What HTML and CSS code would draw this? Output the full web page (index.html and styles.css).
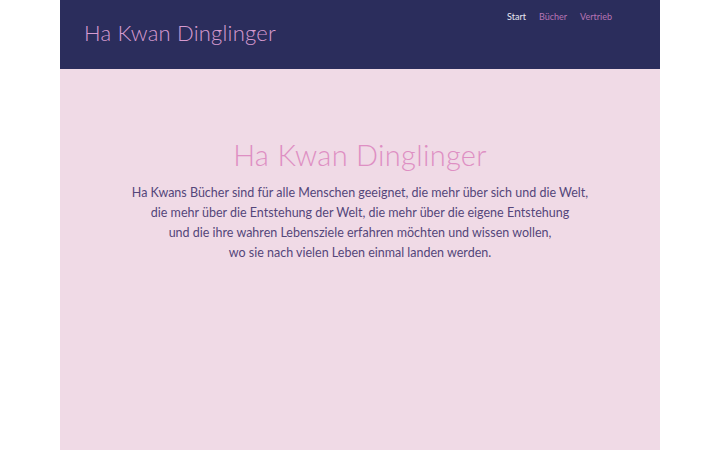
FILE: index.html
```html
<!DOCTYPE html>
<html lang="de">
<head>
<meta charset="utf-8">
<title>Ha Kwan Dinglinger</title>
<link rel="stylesheet" href="styles.css">
</head>
<body>
<div class="page">
  <header class="header">
    <div class="brand">Ha Kwan Dinglinger</div>
    <nav class="nav">
      <a class="nav-link active" href="#">Start</a>
      <a class="nav-link" href="#">Bücher</a>
      <a class="nav-link" href="#">Vertrieb</a>
    </nav>
  </header>
  <main class="main">
    <h1 class="title">Ha Kwan Dinglinger</h1>
    <p class="lead">Ha Kwans Bücher sind für alle Menschen geeignet, die mehr über sich und die Welt,<br>
    die mehr über die Entstehung der Welt, die mehr über die eigene Entstehung<br>
    und die ihre wahren Lebensziele erfahren möchten und wissen wollen,<br>
    wo sie nach vielen Leben einmal landen werden.</p>
  </main>
</div>
</body>
</html>
```
FILE: styles.css
```css
html, body {
  margin: 0;
  padding: 0;
  background: #ffffff;
  height: 100%;
}
body {
  font-family: "Lato", "Liberation Sans", sans-serif;
}
.page {
  width: 600px;
  margin: 0 auto;
  min-height: 100%;
  display: flex;
  flex-direction: column;
  background: #f0dae6;
}
.header {
  background: #2b2d5c;
  height: 69px;
  display: flex;
  justify-content: space-between;
  align-items: flex-start;
  padding: 0 48px 0 24px;
}
.brand {
  font-family: "Lato", sans-serif;
  font-weight: 300;
  font-size: 22px;
  color: #d79bd0;
  margin-top: 19px;
  letter-spacing: 0.2px;
}
.nav {
  display: flex;
  gap: 13px;
  margin-top: 11px;
}
.nav-link {
  font-size: 9px;
  text-decoration: none;
  color: #b775b5;
}
.nav-link.active {
  color: #e8e8f2;
}
.main {
  flex: 1;
  text-align: center;
  padding-top: 68px;
}
.title {
  margin: 0;
  font-weight: 300;
  font-size: 29px;
  color: #de8fc3;
  line-height: 36px;
  letter-spacing: 0.3px;
}
.lead {
  margin: 10px 0 0;
  font-size: 12.5px;
  line-height: 20px;
  color: #54467a;
}
```
